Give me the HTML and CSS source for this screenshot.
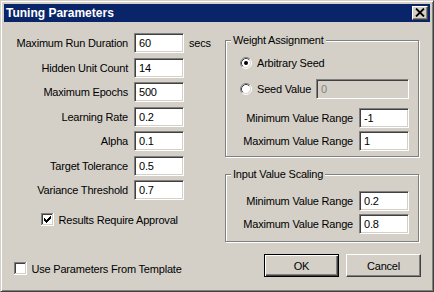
FILE: index.html
```html
<!DOCTYPE html>
<html lang="en">
<head>
    <meta charset="UTF-8">
    <title>Tuning Parameters</title>
    <link rel="stylesheet" href="styles.css">
</head>
<body>
    <div class="window">
        <!-- Title bar -->
        <div class="titlebar">
            <span class="title">Tuning Parameters</span>
            <button class="close-btn" type="button">
                <svg width="10" height="9" viewBox="0 0 10 9">
                    <path d="M1 0.5l8 8M9 0.5l-8 8" stroke="#000" stroke-width="1.8" fill="none"/>
                </svg>
            </button>
        </div>

        <div class="dialog">
            <div class="main">
                <!-- Left: training parameters -->
                <div class="params">
                    <div class="param-grid">
                        <label class="param-label">Maximum Run Duration</label>
                        <input class="field" type="text" value="60">
                        <span class="unit">secs</span>

                        <label class="param-label">Hidden Unit Count</label>
                        <input class="field" type="text" value="14">
                        <span></span>

                        <label class="param-label">Maximum Epochs</label>
                        <input class="field" type="text" value="500">
                        <span></span>

                        <label class="param-label">Learning Rate</label>
                        <input class="field" type="text" value="0.2">
                        <span></span>

                        <label class="param-label">Alpha</label>
                        <input class="field" type="text" value="0.1">
                        <span></span>

                        <label class="param-label">Target Tolerance</label>
                        <input class="field" type="text" value="0.5">
                        <span></span>

                        <label class="param-label">Variance Threshold</label>
                        <input class="field" type="text" value="0.7">
                        <span></span>
                    </div>

                    <label class="check approval">
                        <svg class="checkbox" width="13" height="13" viewBox="0 0 13 13" shape-rendering="crispEdges">
                            <rect width="13" height="13" fill="#fff"/>
                            <rect width="12" height="12" fill="#808080"/>
                            <rect x="1" y="1" width="11" height="11" fill="#d4d0c8"/>
                            <rect x="1" y="1" width="10" height="10" fill="#404040"/>
                            <rect x="2" y="2" width="9" height="9" fill="#fff"/>
                            <path d="M3 5h1v3H3zM4 6h1v3H4zM5 7h1v3H5zM6 6h1v3H6zM7 5h1v3H7zM8 4h1v3H8zM9 3h1v3H9z" fill="#000"/>
                        </svg>
                        Results Require Approval
                    </label>
                </div>

                <!-- Right: group boxes -->
                <div class="groups">
                    <fieldset class="group">
                        <legend>Weight Assignment</legend>
                        <div class="group-body weight-body">
                            <div class="radio-row">
                                <svg class="radio" width="12" height="12" viewBox="0 0 12 12">
                                    <circle cx="6" cy="6" r="4.5" fill="#fff"/>
                                    <path d="M2.82 9.18A4.5 4.5 0 0 1 9.18 2.82" stroke="#404040" fill="none"/>
                                    <path d="M9.18 2.82A4.5 4.5 0 0 1 2.82 9.18" stroke="#d4d0c8" fill="none"/>
                                    <path d="M2.11 9.89A5.5 5.5 0 0 1 9.89 2.11" stroke="#808080" fill="none"/>
                                    <path d="M9.89 2.11A5.5 5.5 0 0 1 2.11 9.89" stroke="#fff" fill="none"/>
                                    <circle cx="6" cy="6" r="2" fill="#000"/>
                                </svg>
                                <span>Arbitrary Seed</span>
                            </div>
                            <div class="radio-row">
                                <svg class="radio" width="12" height="12" viewBox="0 0 12 12">
                                    <circle cx="6" cy="6" r="4.5" fill="#fff"/>
                                    <path d="M2.82 9.18A4.5 4.5 0 0 1 9.18 2.82" stroke="#404040" fill="none"/>
                                    <path d="M9.18 2.82A4.5 4.5 0 0 1 2.82 9.18" stroke="#d4d0c8" fill="none"/>
                                    <path d="M2.11 9.89A5.5 5.5 0 0 1 9.89 2.11" stroke="#808080" fill="none"/>
                                    <path d="M9.89 2.11A5.5 5.5 0 0 1 2.11 9.89" stroke="#fff" fill="none"/>
                                </svg>
                                <span>Seed Value</span>
                                <input class="field seed-field" type="text" value="0" disabled>
                            </div>
                            <div class="range-grid">
                                <label class="param-label">Minimum Value Range</label>
                                <input class="field" type="text" value="-1">
                                <label class="param-label">Maximum Value Range</label>
                                <input class="field" type="text" value="1">
                            </div>
                        </div>
                    </fieldset>

                    <fieldset class="group scaling">
                        <legend>Input Value Scaling</legend>
                        <div class="group-body scaling-body">
                            <div class="range-grid">
                                <label class="param-label">Minimum Value Range</label>
                                <input class="field" type="text" value="0.2">
                                <label class="param-label">Maximum Value Range</label>
                                <input class="field" type="text" value="0.8">
                            </div>
                        </div>
                    </fieldset>
                </div>
            </div>

            <!-- Footer -->
            <div class="footer">
                <label class="check template">
                    <svg class="checkbox" width="13" height="13" viewBox="0 0 13 13" shape-rendering="crispEdges">
                        <rect width="13" height="13" fill="#fff"/>
                        <rect width="12" height="12" fill="#808080"/>
                        <rect x="1" y="1" width="11" height="11" fill="#d4d0c8"/>
                        <rect x="1" y="1" width="10" height="10" fill="#404040"/>
                        <rect x="2" y="2" width="9" height="9" fill="#fff"/>
                    </svg>
                    Use Parameters From Template
                </label>
                <div class="buttons">
                    <button class="btn btn-default" type="button">OK</button>
                    <button class="btn" type="button">Cancel</button>
                </div>
            </div>
        </div>
    </div>
</body>
</html>
```

FILE: styles.css
```css
:root {
    --face: #d4d0c8;
    --shadow: #808080;
    --dark: #404040;
    --light: #fff;
    --caption: #0a246a;
}

* {
    margin: 0;
    padding: 0;
    box-sizing: border-box;
}

body {
    background-color: var(--face);
    font-family: "Liberation Sans", Arial, sans-serif;
    font-size: 11px;
    letter-spacing: -0.2px;
    color: #000;
}

.window {
    width: 434px;
    height: 292px;
    background-color: var(--face);
    border: 1px solid;
    border-color: var(--face) var(--dark) var(--dark) var(--face);
    box-shadow: inset 1px 1px var(--light), inset -1px -1px var(--shadow);
    padding: 3px;
}

/* Title bar */
.titlebar {
    height: 18px;
    background-color: var(--caption);
    display: flex;
    align-items: center;
    justify-content: space-between;
    padding: 0 2px;
}

.title {
    color: white;
    font-weight: bold;
    font-size: 12px;
    letter-spacing: 0;
}

.close-btn {
    width: 16px;
    height: 14px;
    background-color: var(--face);
    border: 1px solid;
    border-color: var(--light) var(--dark) var(--dark) var(--light);
    box-shadow: inset -1px -1px var(--shadow);
    display: flex;
    align-items: center;
    justify-content: center;
    padding-bottom: 1px;
}

.close-btn svg {
    display: block;
}

/* Dialog body */
.dialog {
    padding: 11px 9px 0 10px;
}

.main {
    display: flex;
}

.params {
    width: 211px;
}

.param-grid {
    display: grid;
    grid-template-columns: 114px 50px auto;
    grid-auto-rows: 20px;
    column-gap: 6px;
    row-gap: 4.5px;
}

.param-label {
    text-align: right;
    line-height: 20px;
    white-space: nowrap;
}

.unit {
    line-height: 20px;
    margin-left: -1px;
}

.field {
    width: 50px;
    height: 20px;
    background-color: white;
    border: 1px solid;
    border-color: var(--shadow) var(--light) var(--light) var(--shadow);
    box-shadow: inset 1px 1px var(--dark), inset -1px -1px var(--face);
    padding: 0 4px;
    font-family: inherit;
    font-size: 11px;
    letter-spacing: inherit;
    color: #000;
    outline: none;
}

.field:disabled {
    background-color: var(--face);
    color: var(--shadow);
    -webkit-text-fill-color: var(--shadow);
}

.check {
    display: flex;
    align-items: center;
    gap: 4.5px;
    white-space: nowrap;
}

.checkbox {
    display: block;
    flex-shrink: 0;
}

.approval {
    margin-top: 13px;
    margin-left: 27px;
    height: 13px;
}

/* Group boxes */
.groups {
    width: 194px;
    margin-top: 1px;
}

.group {
    border: 1px solid var(--shadow);
    box-shadow: inset 1px 1px var(--light), 1px 1px var(--light);
    padding: 0;
    min-width: 0;
}

.group legend {
    margin-left: 5px;
    padding: 0 2px;
    line-height: 13px;
    background-color: var(--face);
}

.group-body {
    padding: 6px 9px 5px 14px;
}

.scaling {
    margin-top: 11px;
}

.scaling-body {
    padding-top: 10px;
    padding-bottom: 7px;
}

.radio-row {
    height: 20px;
    display: flex;
    align-items: center;
    gap: 5px;
    white-space: nowrap;
}

.radio-row + .radio-row {
    margin-top: 6px;
}

.radio {
    display: block;
    flex-shrink: 0;
}

.seed-field {
    width: 93px;
    flex-shrink: 0;
    margin-left: auto;
}

.range-grid {
    display: grid;
    grid-template-columns: 1fr 50px;
    grid-auto-rows: 20px;
    column-gap: 6px;
    row-gap: 3px;
}

.weight-body .range-grid {
    margin-top: 9px;
}

/* Footer */
.footer {
    display: flex;
    justify-content: space-between;
    align-items: flex-start;
    margin-top: 12px;
}

.template {
    margin-top: 8px;
}

.buttons {
    display: flex;
    gap: 7px;
}

.btn {
    width: 75px;
    height: 23px;
    background-color: var(--face);
    border: 1px solid;
    border-color: var(--light) var(--dark) var(--dark) var(--light);
    box-shadow: inset -1px -1px var(--shadow);
    font-family: inherit;
    font-size: 11px;
    letter-spacing: inherit;
    color: #000;
}

.btn-default {
    border: 1px solid #000;
    box-shadow: inset 1px 1px var(--light), inset -1px -1px var(--dark), inset -2px -2px var(--shadow);
}
```
